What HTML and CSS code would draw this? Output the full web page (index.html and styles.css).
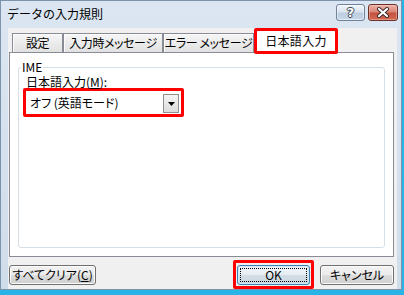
FILE: index.html
```html
<!DOCTYPE html>
<html lang="ja">
<head>
<meta charset="utf-8">
<title>データの入力規則</title>
<link rel="stylesheet" href="styles.css">
</head>
<body>
<div class="window">
  <div class="titlebar">
    <span class="title">データの入力規則</span>
    <div class="caption-btns">
      <div class="cbtn help"><span>?</span></div>
      <div class="cbtn close">
        <svg width="14" height="11" viewBox="0 0 14 11">
          <path d="M3 2 L11 9 M11 2 L3 9" stroke="#3a2a2a" stroke-width="4" stroke-linecap="round" fill="none"/>
          <path d="M3 2 L11 9 M11 2 L3 9" stroke="#ffffff" stroke-width="2.2" stroke-linecap="round" fill="none"/>
        </svg>
      </div>
    </div>
  </div>
  <div class="client">
    <div class="tabs">
      <div class="tab t1">設定</div>
      <div class="tab t2">入力時メッセージ</div>
      <div class="tab t3">エラー メッセージ</div>
      <div class="tab sel">日本語入力</div>
    </div>
    <div class="panel">
      <fieldset class="group">
        <legend>IME</legend>
        <div class="field-label">日本語入力(<u>M</u>):</div>
        <div class="hl combo-hl">
          <div class="combo">
            <span class="combo-text">オフ (英語モード)</span>
            <span class="drop">
              <svg width="7" height="4" viewBox="0 0 7 4"><path d="M0 0 H7 L3.5 4 Z" fill="#000"/></svg>
            </span>
          </div>
        </div>
      </fieldset>
    </div>
    <div class="buttons">
      <div class="btn clear">すべてクリア(<u>C</u>)</div>
      <div class="spacer"></div>
      <div class="hl ok-hl"><div class="btn ok"><span class="focus">OK</span></div></div>
      <div class="btn cancel">キャンセル</div>
    </div>
  </div>
</div>
</body>
</html>
```

FILE: styles.css
```css
html, body {
  margin: 0;
  padding: 0;
}
body {
  width: 404px;
  height: 295px;
  overflow: hidden;
  background: #28b4e6;
  font-family: "Noto Sans CJK JP", "Noto Sans", sans-serif;
  font-size: 12px;
  color: #000;
}
.window {
  width: 402px;
  height: 290px;
  box-sizing: border-box;
  border: 1px solid #7d93ab;
  background: linear-gradient(#dbe6f2, #cfdcea);
  display: flex;
  flex-direction: column;
}
.titlebar {
  height: 27px;
  flex: none;
  display: flex;
  justify-content: space-between;
  align-items: flex-start;
}
.title {
  margin: 5px 0 0 6px;
  line-height: 16px;
  font-size: 12px;
}
.caption-btns {
  display: flex;
  margin: 3px 3px 0 0;
}
.cbtn {
  height: 17px;
  box-sizing: border-box;
  border-radius: 3px;
  display: flex;
  align-items: center;
  justify-content: center;
}
.help {
  width: 29px;
  margin-right: 3px;
  border: 1px solid #6f8299;
  background: linear-gradient(#f1f5fa 0%, #d9e3ee 48%, #bccde0 52%, #c9d7e7 100%);
  box-shadow: inset 0 0 0 1px rgba(255,255,255,0.5);
}
.help span {
  font-family: "DejaVu Sans", sans-serif;
  font-weight: bold;
  font-size: 13px;
  line-height: 13px;
  color: #fff;
  text-shadow: 1px 0 0 #3b4654, -1px 0 0 #3b4654, 0 1px 0 #3b4654, 0 -1px 0 #3b4654;
}
.close {
  width: 30px;
  border: 1px solid #6b3128;
  background: linear-gradient(#ebb0a3 0%, #d98574 48%, #c5503d 52%, #d16a52 100%);
  box-shadow: inset 0 0 0 1px rgba(255,220,210,0.4);
}
.client {
  flex: 1;
  margin: 0 4px 1px 7px;
  padding: 0 3px 0 1px;
  background: #f0f0f0;
  display: flex;
  flex-direction: column;
}
.tabs {
  height: 24px;
  flex: none;
  display: flex;
  align-items: flex-end;
  padding-left: 3px;
}
.tab {
  height: 19px;
  box-sizing: border-box;
  border: 1px solid #898c95;
  border-bottom: none;
  background: linear-gradient(#f6f6f6, #e1e1e1);
  box-shadow: inset 1px 1px 0 #fcfcfc;
  text-align: center;
  line-height: 18px;
  font-feature-settings: "palt";
  letter-spacing: -0.4px;
}
.t1 { width: 51px; }
.t2 { width: 100px; }
.t3 { width: 91px; }
.tab.sel {
  width: 84px;
  height: 26px;
  margin-bottom: -2px;
  border: 3px solid #ff0000;
  border-radius: 2px;
  background: #fff;
  box-shadow: none;
  line-height: 19px;
  position: relative;
  z-index: 1;
  letter-spacing: 0.3px;
}
.panel {
  height: 205px;
  flex: none;
  box-sizing: border-box;
  border: 1px solid #898c95;
  background: #fff;
  padding: 7px 8px 0 8px;
}
.group {
  margin: 0;
  height: 188px;
  box-sizing: border-box;
  border: 1px solid #d5dfe5;
  border-radius: 3px;
  padding: 0 0 0 2px;
  min-width: 0;
}
.group legend {
  padding: 0 1px;
  line-height: 14px;
  font-size: 12px;
}
.field-label {
  margin: 2px 0 0 5px;
  line-height: 12px;
  font-feature-settings: "palt";
}
.field-label u {
  text-decoration: underline;
}
.hl {
  border: 3px solid #ff0000;
  border-radius: 2px;
  box-sizing: border-box;
}
.combo-hl {
  width: 161px;
  height: 29px;
  margin-left: 2px;
}
.combo {
  height: 23px;
  background: #fff;
  display: flex;
  align-items: center;
  justify-content: space-between;
  padding: 0 2px 0 4px;
}
.combo-text {
  line-height: 16px;
  font-feature-settings: "palt";
}
.drop {
  width: 16px;
  height: 19px;
  margin-top: 2px;
  box-sizing: border-box;
  border: 1px solid #8e8f8f;
  background: linear-gradient(#f4f4f4, #dcdcdc);
  display: flex;
  align-items: center;
  justify-content: center;
}
.buttons {
  flex: 1;
  display: flex;
  align-items: center;
  padding-top: 3px;
}
.spacer {
  flex: 1;
}
.btn {
  height: 20px;
  box-sizing: border-box;
  border: 1px solid #707070;
  border-radius: 3px;
  background: linear-gradient(#f2f2f2 0%, #ebebeb 50%, #dddddd 51%, #cfcfcf 100%);
  box-shadow: inset 0 0 0 1px #fbfbfb;
  display: flex;
  align-items: center;
  justify-content: center;
  line-height: 16px;
  font-feature-settings: "palt";
}
.clear { width: 87px; }
.cancel { width: 74px; }
.ok-hl {
  width: 81px;
  height: 29px;
  margin-right: 6px;
  padding: 2px 1px 1px 1px;
}
.ok {
  width: 73px;
  height: 20px;
  border-color: #3c7fb1;
  background: linear-gradient(#f0f5f9 0%, #e6edf2 50%, #d4dee5 51%, #c8d4dd 100%);
  box-shadow: inset 0 0 0 1px #cfe9f8;
  padding: 2px;
}
.focus {
  flex: 1;
  align-self: stretch;
  border: 1px dotted #000;
  text-align: center;
  line-height: 12px;
}
```
